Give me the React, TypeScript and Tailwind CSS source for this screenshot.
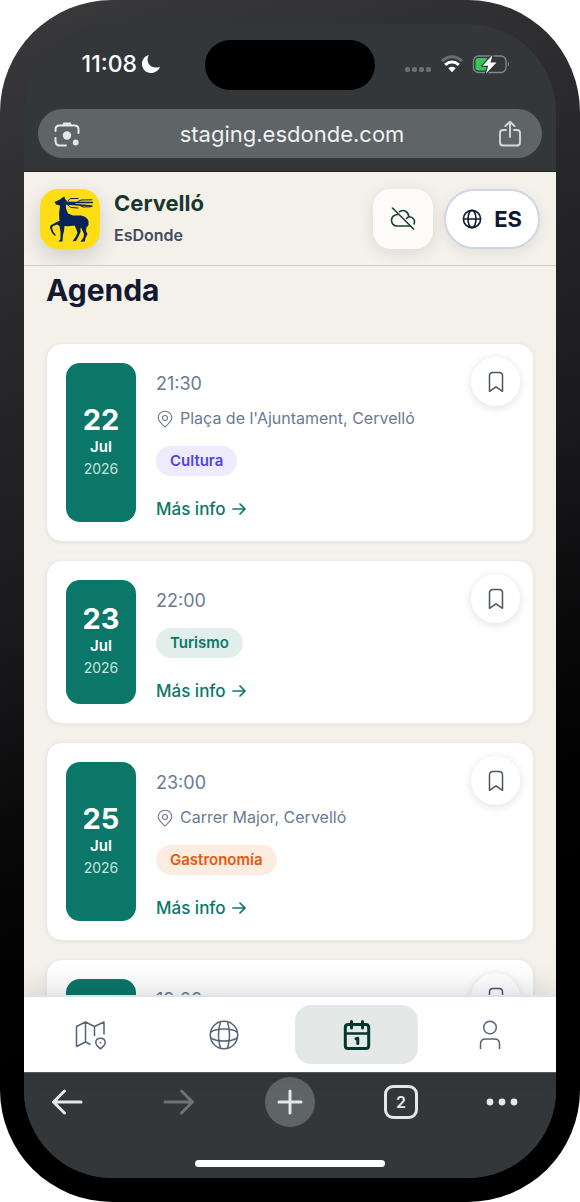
import React, { useState } from 'react';
import clsx from 'clsx';

type Category = 'Cultura' | 'Turismo' | 'Gastronomía';

interface AgendaEvent {
  id: number;
  day: string;
  month: string;
  year: string;
  time: string;
  place?: string;
  category: Category;
}

const EVENTS: AgendaEvent[] = [
  { id: 1, day: '22', month: 'Jul', year: '2026', time: '21:30', place: "Plaça de l'Ajuntament, Cervelló", category: 'Cultura' },
  { id: 2, day: '23', month: 'Jul', year: '2026', time: '22:00', category: 'Turismo' },
  { id: 3, day: '25', month: 'Jul', year: '2026', time: '23:00', place: 'Carrer Major, Cervelló', category: 'Gastronomía' },
  { id: 4, day: '26', month: 'Jul', year: '2026', time: '19:00', category: 'Cultura' },
];

const CATEGORY_STYLES: Record<Category, string> = {
  Cultura: 'bg-[#edebfd] text-[#5145e0]',
  Turismo: 'bg-[#e1eeec] text-[#0b7768]',
  'Gastronomía': 'bg-[#fdece0] text-[#e8590c]',
};

const StatusBar = () => (
  <div className="grid grid-cols-[1fr_170px_1fr] items-center pt-4">
    <div className="flex items-center justify-end gap-1 pr-11 pb-[2px] text-[23px] leading-7 font-medium text-white">
      <span>11:08</span>
      <svg viewBox="0 0 20 20" className="h-5 w-5" fill="#fff" aria-hidden="true">
        <path d="M8 1C3.8 2 1 5.500 1 10C1 15 4.900 19 9.900 19C14 19 17.600 16.600 19 12.700C17.700 13.300 16.300 13.600 14.900 13.600C10 13.600 6.600 10.300 6.600 5.600C6.600 4 7 2.400 8 1Z" />
      </svg>
    </div>
    <div className="h-[50px] rounded-full bg-black" />
    <div className="flex items-center gap-2 pb-[2px] pl-[29px]">
      <svg viewBox="0 0 28 20" className="h-5 w-7" fill="#6b6e71" aria-hidden="true">
        {[0, 7, 14, 21].map(x => (
          <rect key={x} x={x + 1} y="13" width="5" height="5" rx="1.800" />
        ))}
      </svg>
      <svg viewBox="0 0 24 18" className="h-[18px] w-6" fill="none" aria-hidden="true">
        <path d="M2 6.200C8 .4 16 .4 22 6.200" stroke="#6b6e71" strokeWidth="3" />
        <path d="M5.200 9.800C9.200 6.200 14.800 6.200 18.800 9.800" stroke="#fff" strokeWidth="3" />
        <path d="M8.300 13.200C10.500 11.400 13.500 11.400 15.700 13.200L12 17.200Z" fill="#fff" />
      </svg>
      <svg viewBox="0 0 38 20" className="h-5 w-[38px]" fill="none" aria-hidden="true">
        <rect x="1.500" y="2" width="32.500" height="16.500" rx="5" stroke="#85888a" strokeWidth="1.300" />
        <path d="M35.800 7.800C37.400 8.400 37.400 12.200 35.800 12.800Z" fill="#85888a" />
        <path d="M6.500 4H15V16.500H6.500Q3.500 16.500 3.500 13.500V7Q3.500 4 6.500 4Z" fill="#34c759" />
        <path d="M20.500 1L10.500 11.800H16.200L14 19.500L24.500 8.600H18.500Z" fill="#fff" stroke="#33373a" strokeWidth="2.400" strokeLinejoin="round" paintOrder="stroke" />
      </svg>
    </div>
  </div>
);

const AddressBar = () => (
  <div className="mx-[14px] mt-[19px] mb-[13px] flex h-[49px] items-center justify-between rounded-full bg-[#5f6467] px-4">
    <button aria-label="Lens" className="w-9 text-[#e3e8ea]">
      <svg viewBox="0 0 26 26" className="h-[26px] w-[26px]" fill="none" stroke="currentColor" strokeWidth="2" strokeLinecap="round" aria-hidden="true">
        <path d="M1.500 10V8.500Q1.500 4.500 5.500 4.500H20.500Q24.500 4.500 24.500 8.500V12" />
        <path d="M8 4.300L9.500 1.600H16.500L18 4.300Z" fill="currentColor" stroke="none" />
        <path d="M1.500 17V20Q1.500 24.500 6 24.500H12" />
        <circle cx="13" cy="14.500" r="4.200" fill="currentColor" stroke="none" />
        <circle cx="21.700" cy="21.500" r="2.900" fill="currentColor" stroke="none" />
      </svg>
    </button>
    <span className="text-[22px] leading-7 text-[#eef1f2]">staging.esdonde.com</span>
    <button aria-label="Share" className="px-1 text-[#d5d9db]">
      <svg viewBox="0 0 24 28" className="h-7 w-6" fill="none" stroke="currentColor" strokeWidth="1.900" strokeLinecap="round" strokeLinejoin="round" aria-hidden="true">
        <path d="M8 10H5Q2 10 2 13V22.500Q2 25.500 5 25.500H19Q22 25.500 22 22.500V13Q22 10 19 10H16" />
        <path d="M12 17V2M7.500 6L12 1.700L16.500 6" />
      </svg>
    </button>
  </div>
);

const TownCrest = () => (
  <svg viewBox="0 0 60 60" className="h-[60px] w-[60px] rounded-[18px] bg-[#ffdd15] shadow-[0_8px_20px_rgba(15,23,42,0.16)]" role="img" aria-label="Cervelló">
    <path
      fill="#08235a"
      d="M14.500 13L20 10.500L22.500 8.500L24.500 7.500L25 10L27 12L25.800 15L26.200 20L28 24.500L33 26.500L41 26.500Q47 27.500 48.500 32L48.500 36L46.500 38.500L46 42L47.500 45L45.500 49L44.800 52.500L40.500 52.800L43.500 48.500L44 45L41.500 39.500L40.500 38.500L40.500 43L38.500 47.500L36 52L32.500 52.300L35.500 48L37.500 43.500L36 39.500L34.500 36.500Q29 37.500 24.500 37L24 42L23 46L22.500 52.500L18.500 52.500L20.500 50L20.500 43L19.500 37L17 35.500L13 37L12 39L13.500 43L15.800 46L15 47L12 44L10 39L10.500 36.500L17 32.800L19.500 32L19 25L20 16.500L16 15.500Z"
    />
    <g fill="none" stroke="#08235a" strokeWidth="1" strokeLinecap="round">
      <path d="M26 13.500L52.500 13.500M27 15L52 17" strokeWidth="1.300" />
      <path d="M28 12L30 9.700L38 9.500M38 12.500L41 11L52 10.800M28 16L31 18.500L38 19M40 16.500L43 18L51 17.800" />
      <path d="M26 14.200L34 14.400" strokeWidth="3" />
    </g>
  </svg>
);

const AppHeader = () => (
  <header className="flex items-center justify-between border-t border-b border-t-[#231f20] border-b-[#cfcfce] bg-[#f4f1ea] px-4 pt-[15px] pb-[14px]">
    <div className="flex items-center gap-[14px]">
      <TownCrest />
      <div>
        <p className="text-[22px] leading-8 font-bold text-[#17382f]">Cervelló</p>
        <p className="text-base leading-8 font-semibold text-[#3f4a60]">EsDonde</p>
      </div>
    </div>
    <div className="flex items-center gap-[11px]">
      <button aria-label="Sin conexión" className="flex h-[60px] w-[60px] items-center justify-center rounded-[18px] bg-[#fcfbf9] text-[#1d4034] shadow-[0_4px_16px_rgba(15,23,42,0.10)]">
        <svg viewBox="0 0 26 26" className="h-[26px] w-[26px]" fill="none" stroke="currentColor" strokeWidth="1.600" strokeLinecap="round" strokeLinejoin="round" aria-hidden="true">
          <path d="M2.500 2L23.500 23" />
          <path d="M7.500 8.500C3.500 9 1.500 11.500 1.500 14.500C1.500 17.500 3.800 20 7 20H20.500" />
          <path d="M9.500 5.700C14 3 18 5.300 19 10.800C23.500 11 25.500 14.500 24 17.800" />
          <path d="M16.500 12.500Q17.500 11 19 10.800" />
        </svg>
      </button>
      <button className="flex h-[60px] items-center gap-3 rounded-full border-2 border-[#cdd7e5] bg-white px-4 text-[#101830] shadow-[0_4px_14px_rgba(15,23,42,0.08)]">
        <svg viewBox="0 0 20 20" className="h-5 w-5" fill="none" stroke="currentColor" strokeWidth="1.600" aria-hidden="true">
          <circle cx="10" cy="10" r="8.600" />
          <ellipse cx="10" cy="10" rx="4" ry="8.600" />
          <path d="M1.400 10H18.600" />
        </svg>
        <span className="text-[22px] leading-7 font-bold">ES</span>
      </button>
    </div>
  </header>
);

const EventCard = ({ event }: { event: AgendaEvent }) => {
  const [saved, setSaved] = useState(false);

  return (
    <article className="relative flex shrink-0 gap-5 rounded-2xl border border-[#ebebea] bg-white p-[19px] shadow-[0_1px_4px_rgba(15,23,42,0.06)]">
      <div className="flex w-[70px] shrink-0 flex-col items-center justify-center rounded-[14px] bg-[#0b7768] pb-[2px] text-white">
        <span className="text-[29px] leading-8 font-bold">{event.day}</span>
        <span className="text-[15px] leading-[22px] font-semibold">{event.month}</span>
        <span className="text-[14px] leading-[22px] text-[#c9e2de]">{event.year}</span>
      </div>
      <div className="flex min-w-0 flex-1 flex-col items-start pt-[7px]">
        <p className="text-[18px] leading-[27px] text-[#6b7a92]">{event.time}</p>
        {event.place && (
          <p className="mt-2 flex items-center gap-[6px] text-base leading-[27px] text-[#6b7a92]">
            <svg viewBox="0 0 18 18" className="h-[18px] w-[18px]" fill="none" stroke="currentColor" strokeWidth="1.100" strokeLinejoin="round" aria-hidden="true">
              <path d="M9 17C5 13.500 2.200 11.200 2.200 7.800C2.200 4 5.200 1.200 9 1.200C12.800 1.200 15.800 4 15.800 7.800C15.800 11.200 13 13.500 9 17Z" />
              <circle cx="9" cy="8" r="2.500" />
            </svg>
            {event.place}
          </p>
        )}
        <span className={clsx('mt-[14px] rounded-full px-[14px] text-[15px] leading-[30px] font-semibold', CATEGORY_STYLES[event.category])}>
          {event.category}
        </span>
        <a href="#evento" className="mt-5 flex items-center gap-[6px] text-[17px] leading-[26px] font-medium text-[#0b7768]">
          Más info
          <svg viewBox="0 0 14 14" className="h-[14px] w-[14px]" fill="none" stroke="currentColor" strokeWidth="1.700" strokeLinecap="round" strokeLinejoin="round" aria-hidden="true">
            <path d="M1 7H13M8 2L13 7L8 12" />
          </svg>
        </a>
      </div>
      <button
        aria-label="Guardar"
        aria-pressed={saved}
        onClick={() => setSaved(s => !s)}
        className="absolute top-[13px] right-[13px] flex h-[49px] w-[49px] items-center justify-center rounded-full bg-white text-[#4a5368] shadow-[0_2px_10px_rgba(15,23,42,0.13)]"
      >
        <svg viewBox="0 0 16 22" className="h-[22px] w-4" fill={saved ? 'currentColor' : 'none'} stroke="currentColor" strokeWidth="1.500" strokeLinejoin="round" aria-hidden="true">
          <path d="M1.500 20.300V5Q1.500 1.500 5 1.500H11Q14.500 1.500 14.500 5V20.300L8 15.800Z" />
        </svg>
      </button>
    </article>
  );
};

const MapIcon = () => (
  <svg viewBox="0 0 32 30" className="h-[30px] w-8" fill="none" stroke="currentColor" strokeWidth="1.500" strokeLinejoin="round" aria-hidden="true">
    <path d="M15.500 24.500L10.500 22L1.500 26.500V6.500L10.500 2L19.500 6.500L29 2V14.500M10.500 2V22M19.500 6.500V16" />
    <path d="M25.500 28.800C22.500 26.300 20.800 24.800 20.800 22.700C20.800 20 22.800 18.200 25.500 18.200C28.200 18.200 30.200 20 30.200 22.700C30.200 24.800 28.500 26.300 25.500 28.800Z" />
    <circle cx="25.500" cy="22.700" r=".9" fill="currentColor" stroke="none" />
  </svg>
);

const WorldIcon = () => (
  <svg viewBox="0 0 30 30" className="h-[30px] w-[30px]" fill="none" stroke="currentColor" strokeWidth="1.500" aria-hidden="true">
    <circle cx="15" cy="15" r="13.700" />
    <path d="M11.500 1.900C8.800 9.500 8.800 20.500 11.500 28.100M18.500 1.900C21.200 9.500 21.200 20.500 18.500 28.100" />
    <path d="M1.800 12C8 8 22 8 28.200 12M1.800 18C8 22 22 22 28.200 18" />
  </svg>
);

const CalendarIcon = () => (
  <svg viewBox="0 0 28 32" className="h-8 w-7" fill="none" stroke="currentColor" strokeWidth="3" strokeLinecap="round" strokeLinejoin="round" aria-hidden="true">
    <path d="M5 5.500H23Q25.700 5.500 25.700 8.500V26.500Q25.700 29.500 23 29.500H5Q2.300 29.500 2.300 26.500V8.500Q2.300 5.500 5 5.500Z" />
    <path d="M2.300 14.500H25.700" strokeWidth="2.600" />
    <path d="M8.500 2.500V9M19.500 2.500V9M13 19.700L14.800 19.300V24.500" />
  </svg>
);

const PersonIcon = () => (
  <svg viewBox="0 0 24 30" className="h-[30px] w-6" fill="none" stroke="currentColor" strokeWidth="1.500" aria-hidden="true">
    <circle cx="12" cy="7.500" r="6.300" />
    <path d="M2.500 29V24Q2.500 19 7.500 19H16.500Q21.500 19 21.500 24V29" />
  </svg>
);

const TABS = [
  { id: 'map', label: 'Mapa', icon: MapIcon },
  { id: 'explore', label: 'Explorar', icon: WorldIcon },
  { id: 'agenda', label: 'Agenda', icon: CalendarIcon },
  { id: 'profile', label: 'Perfil', icon: PersonIcon },
];

const BottomNav = () => {
  const [active, setActive] = useState('agenda');

  return (
    <nav className="relative grid grid-cols-4 border-t-2 border-[#dbe2ec] bg-white py-2 shadow-[0_-6px_28px_rgba(15,23,42,0.14)]">
      {TABS.map(tab => (
        <button
          key={tab.id}
          aria-label={tab.label}
          onClick={() => setActive(tab.id)}
          className={clsx(
            'mx-[5px] flex h-[59px] items-center justify-center rounded-2xl',
            active === tab.id ? 'bg-[#e4e9e7] text-[#03362d]' : 'text-[#566378]'
          )}
        >
          <tab.icon />
        </button>
      ))}
    </nav>
  );
};

const BrowserToolbar = () => (
  <div className="border-t border-[#5a5d5f] bg-[#33373a] pb-[11px]">
    <div className="grid grid-cols-[1fr_50px_1fr] items-center pt-1">
      <div className="flex items-center justify-between pr-[70px] pl-[27px]">
        <button aria-label="Atrás" className="text-[#e3e8ea]">
          <svg viewBox="0 0 32 28" className="h-7 w-8" fill="none" stroke="currentColor" strokeWidth="3" strokeLinecap="round" strokeLinejoin="round" aria-hidden="true">
            <path d="M30 14H2.500M13.500 3L2.500 14L13.500 25" />
          </svg>
        </button>
        <button aria-label="Adelante" className="text-[#6f7375]">
          <svg viewBox="0 0 32 28" className="h-7 w-8" fill="none" stroke="currentColor" strokeWidth="3" strokeLinecap="round" strokeLinejoin="round" aria-hidden="true">
            <path d="M2 14H29.500M18.500 3L29.500 14L18.500 25" />
          </svg>
        </button>
      </div>
      <button aria-label="Nueva pestaña" className="flex h-[50px] items-center justify-center rounded-full bg-[#5f6467] text-[#e3e8ea]">
        <svg viewBox="0 0 26 26" className="h-[26px] w-[26px]" fill="none" stroke="currentColor" strokeWidth="3" strokeLinecap="round" aria-hidden="true">
          <path d="M13 2V24M2 13H24" />
        </svg>
      </button>
      <div className="flex items-center justify-between pr-[38px] pl-[69px]">
        <button className="flex h-[34px] w-[34px] items-center justify-center rounded-[9px] border-3 border-[#e3e8ea] text-base leading-5 font-semibold text-[#e3e8ea]">
          2
        </button>
        <button aria-label="Más opciones" className="text-[#e3e8ea]">
          <svg viewBox="0 0 32 8" className="h-2 w-8" fill="currentColor" aria-hidden="true">
            <circle cx="4" cy="4" r="3.400" />
            <circle cx="16" cy="4" r="3.400" />
            <circle cx="28" cy="4" r="3.400" />
          </svg>
        </button>
      </div>
    </div>
    <div className="mx-auto mt-[33px] h-[7px] w-[190px] rounded-full bg-white" />
  </div>
);

export default function App() {
  return (
    <div className="h-screen bg-white font-['Inter',sans-serif]">
      <div className="h-full rounded-[112px] bg-linear-160 from-[#3a3a3c] via-[#1a1a1c] via-45% to-black to-85% p-6">
        <div className="flex h-full flex-col overflow-hidden rounded-[88px] bg-[#33373a]">
          <StatusBar />
          <AddressBar />
          <AppHeader />
          <main className="flex min-h-0 flex-1 flex-col gap-[18px] overflow-y-auto bg-[#f4f1ea] px-[22px] pt-1 [scrollbar-width:none]">
            <h1 className="mb-[15px] text-[30px] leading-10 font-bold text-[#111a2e]">Agenda</h1>
            {EVENTS.map(event => (
              <EventCard key={event.id} event={event} />
            ))}
          </main>
          <BottomNav />
          <BrowserToolbar />
        </div>
      </div>
    </div>
  );
}
